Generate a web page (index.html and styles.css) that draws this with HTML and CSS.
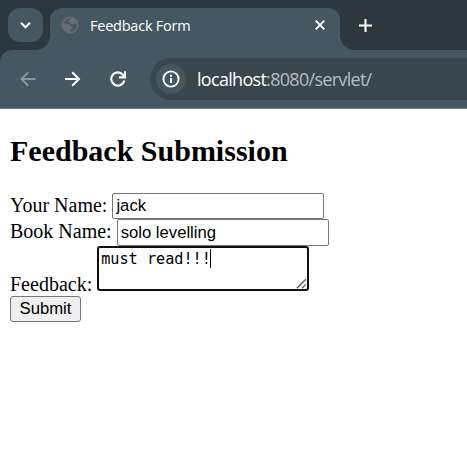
FILE: index.html
```html
<!DOCTYPE html>
<html lang="en">
<head>
<meta charset="utf-8">
<title>Feedback Form</title>
<link rel="stylesheet" href="styles.css">
</head>
<body>
<header class="browser">
  <div class="tabstrip">
    <div class="tab-search">
      <svg width="35" height="34" viewBox="0 0 35 34"><path d="M13 14.8l4.5 4.5 4.5-4.5" fill="none" stroke="#fff" stroke-width="2"/></svg>
    </div>
    <div class="tab">
      <svg class="globe" width="18" height="18" viewBox="0 0 18 18"><circle cx="9" cy="9" r="7.7" fill="none" stroke="#6b6c70" stroke-width="1.7"/><path d="M2 7.5L7.5 8c2 .2 1.5 2.500 3.300 2.700 1.500.3 1.200 1.800-.3 2.100-1.700.3-1.300 1.700-1.400 3.900C4 16.500 1 12 2 7.500zM10.200 1.500C9.700 3.800 8 3.200 7.700 5c-.2 1.600 1.600 1.200 2.200 2.500.7 1.500 2 1.400 2.600.6.8-1 2.200-.3 4.100-.1C15.800 4.200 13.500 2 10.200 1.500z" fill="#6b6c70"/></svg>
      <span class="tab-title">Feedback Form</span>
      <svg class="close" width="10" height="10" viewBox="0 0 10 10"><path d="M.7.7l8.600 8.600M9.300.7L.7 9.300" stroke="#fff" stroke-width="1.900"/></svg>
    </div>
    <svg class="new-tab" width="13" height="13" viewBox="0 0 13 13"><path d="M6.500 0v13M0 6.500h13" stroke="#fff" stroke-width="2"/></svg>
  </div>
  <div class="toolbar">
    <svg class="nav" width="16" height="16" viewBox="0 0 16 16"><path d="M15.500 8H2M8.300 1.200L1.500 8l6.800 6.800" fill="none" stroke="#8b979d" stroke-width="1.900"/></svg>
    <svg class="nav" width="16" height="16" viewBox="0 0 16 16"><path d="M0 8H13.500M7.200 1.200L14 8l-6.800 6.800" fill="none" stroke="#fff" stroke-width="2"/></svg>
    <svg class="nav" width="16" height="16" viewBox="0 0 16 16"><path d="M14.300 9.500A6.600 6.600 0 1 1 12.900 3.700L14.600 5.500M15 .2v6.200H9" fill="none" stroke="#fff" stroke-width="2.100"/></svg>
    <div class="address">
      <span class="site-info"><svg width="18" height="18" viewBox="0 0 18 18"><circle cx="9" cy="9" r="7.600" fill="none" stroke="#fff" stroke-width="1.900"/><path d="M9 8v5M9 4.700v2" stroke="#fff" stroke-width="1.900"/></svg></span>
      <span class="url">localhost<span class="path">:8080/servlet/</span></span>
    </div>
  </div>
</header>
<main>
  <h2>Feedback Submission</h2>
  <form>
    <div class="row name"><label for="name">Your Name:</label><input id="name" value="jack"></div>
    <div class="row book"><label for="book">Book Name:</label><input id="book" value="solo levelling"></div>
    <div class="row feedback"><label for="feedback">Feedback:</label><div class="area"><textarea id="feedback">must read!!!</textarea><i class="caret"></i><svg class="grip" width="11" height="11" viewBox="0 0 11 11"><path d="M.8 10.200L9.800 1.200M6 10.200L9.800 6.400" stroke="#555" stroke-width="1.300"/></svg></div></div>
    <button type="button">Submit</button>
  </form>
</main>
</body>
</html>
```
FILE: styles.css
```css
* { box-sizing: border-box; }
body { margin: 0; background: #fff; color: #000; font: 20px/23px "Liberation Serif", serif; overflow: hidden; }
svg { display: block; flex: none; }

.browser { height: 109px; background: #2d383e; font-family: "Open Sans", "Noto Sans", sans-serif; }
.tabstrip { display: flex; height: 50px; padding: 8px 0 0 8px; }
.tab-search { width: 35px; height: 34px; border-radius: 12px; background: #455760; }
.tab {
  position: relative; display: flex; align-items: center; width: 290px; height: 42px;
  margin-left: 7px; padding: 0 15px 8px 11px; border-radius: 12px 12px 0 0; background: #455760;
}
.tab::before, .tab::after { content: ""; position: absolute; bottom: 0; width: 14px; height: 14px; }
.tab::before { left: -14px; background: radial-gradient(circle at 0 0, transparent 13.5px, #455760 14px); }
.tab::after { right: -14px; background: radial-gradient(circle at 100% 0, transparent 13.5px, #455760 14px); }
.tab-title { margin: 2px 0 0 11px; color: #fff; font-size: 14.5px; line-height: 20px; letter-spacing: -0.23px; white-space: nowrap; }
.close { margin-left: auto; }
.new-tab { margin: 11px 0 0 19px; }
.toolbar {
  display: flex; align-items: center; height: 59px; padding: 0 0 1px 20px;
  border-radius: 12px 0 0 0; background: #455760; border-bottom: 1px solid #6b7980;
}
.nav { margin-right: 29px; }
.address {
  display: flex; align-items: center; flex: 1; height: 42px; margin-left: -5px; padding-left: 6px;
  border-radius: 21px 0 0 21px; background: #39464c;
}
.site-info { display: flex; align-items: center; justify-content: center; width: 30px; height: 30px; border-radius: 50%; background: #455760; }
.url { margin: 1px 0 0 11px; color: #fff; font-size: 18px; line-height: 24px; letter-spacing: -0.7px; white-space: nowrap; }
.path { color: #b5bdc0; }

main { padding: 25px 10px 0; }
h2 { margin: 0; font-size: 30px; line-height: 34px; font-weight: bold; }
form { margin-top: 25px; }
.row { display: flex; gap: 5px; }
.name { height: 26px; }
.book { height: 27px; }
.feedback { height: 50px; }
.row label { white-space: nowrap; }
.name label, .book label { padding-top: 1px; }
.feedback label { padding-top: 27px; }
input {
  width: 212px; height: 26px; padding: 0 3px; border: 1px solid #767676; border-radius: 2px;
  background: #fff; color: #000; font: 16.667px/20px "Liberation Sans", sans-serif; outline: none;
}
.book input { height: 27px; }
.area { position: relative; width: 212px; height: 45px; }
textarea {
  display: block; width: 212px; height: 45px; padding: 1px 2px; border: 2px solid #101010; border-radius: 3px;
  background: #fff; color: #000; font: 15.2px/20px "DejaVu Sans Mono", monospace; resize: none; overflow: hidden; outline: none;
}
.caret { position: absolute; left: 113px; top: 3px; width: 1px; height: 19px; background: #000; }
.grip { position: absolute; right: 2px; bottom: 2px; }
button {
  display: block; width: 71px; height: 26px; padding: 0; border: 1px solid #767676; border-radius: 3px;
  background: #efefef; color: #000; font: 16.667px/20px "Liberation Sans", sans-serif;
}
```
